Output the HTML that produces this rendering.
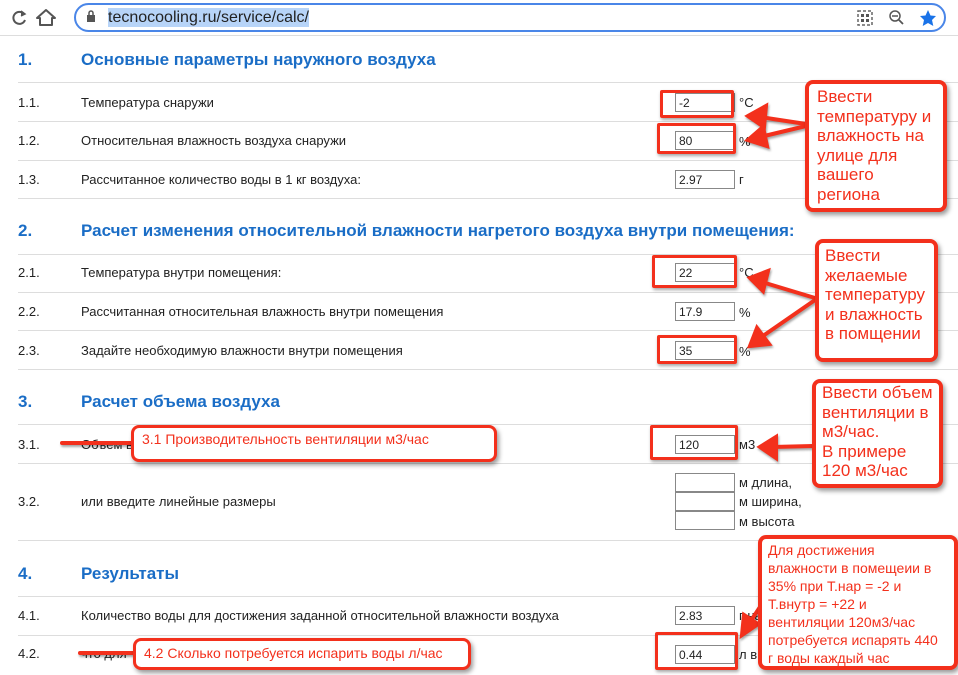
<!DOCTYPE html>
<html><head><meta charset="utf-8"><style>
*{margin:0;padding:0;box-sizing:border-box}
body{width:958px;height:675px;overflow:hidden;background:#fff;font-family:"Liberation Sans","DejaVu Sans",sans-serif;position:relative;color:#222}
.a{position:absolute;white-space:nowrap}
.hr{position:absolute;left:18px;right:0;height:1px;background:#ddd}
.n{position:absolute;left:18px;font-size:13px}
.l{position:absolute;left:81px;font-size:13px}
.h{position:absolute;font-size:17px;font-weight:bold;color:#1a6dc6}
.in{position:absolute;left:675px;width:60px;height:19px;border:1px solid #888;font-size:12px;padding:2px 3px;background:#fff}
.u{position:absolute;left:739px;font-size:13px}
.rb{position:absolute;border:3px solid #f3301c;border-radius:2px;box-shadow:1px 2px 3px rgba(0,0,0,.35)}
.cb{position:absolute;border:4px solid #f3301c;border-radius:8px;background:#fff;color:#f3301c;box-shadow:2px 3px 5px rgba(0,0,0,.4);line-height:19.5px;font-size:17px;padding:3px 6px;white-space:nowrap}
</style></head><body>
<div class="a" style="left:0;top:0;width:958px;height:36px;background:#fff;border-bottom:1px solid #ddd"></div>
<svg class="a" style="left:10px;top:8px" width="48" height="20" viewBox="0 0 48 20">
<path d="M14 6 A6 6 0 1 0 15 12" fill="none" stroke="#555" stroke-width="2"/><path d="M11 3 L15 6 L11 8" fill="#555" stroke="#555" stroke-width="1.5"/>
<path d="M36 2 L45 10 H42 V17 H30 V10 H27 Z" fill="none" stroke="#555" stroke-width="2" stroke-linejoin="round"/>
</svg>
<div class="a" style="left:74px;top:3px;width:872px;height:29px;border:2px solid #4a86e8;border-radius:15px"></div>
<svg class="a" style="left:86px;top:10px" width="10" height="13"><rect x="1" y="5" width="8" height="7" fill="#555"/><path d="M3 5V3a2 2 0 0 1 4 0v2" fill="none" stroke="#555" stroke-width="1.5"/></svg>
<div class="a" style="left:108px;top:8px;font-size:16px;color:#222;background:#b7d4f8;line-height:19px">tecnocooling.ru/service/calc/</div>
<svg class="a" style="left:856px;top:9px" width="90" height="18">
<rect x="2" y="2" width="14" height="14" fill="none" stroke="#666" stroke-width="1.5" stroke-dasharray="3 2"/><rect x="5" y="5" width="3" height="3" fill="#555"/><rect x="10" y="5" width="3" height="3" fill="#555"/><rect x="5" y="10" width="3" height="3" fill="#555"/><rect x="10" y="10" width="3" height="3" fill="#555"/>
<circle cx="39" cy="7" r="5" fill="none" stroke="#555" stroke-width="1.5"/><line x1="36" y1="7" x2="42" y2="7" stroke="#555" stroke-width="1.5"/><line x1="43" y1="11" x2="47" y2="15" stroke="#555" stroke-width="1.8"/>
<path d="M72 1 L74.5 6.5 L80 7 L76 11 L77.3 17 L72 14 L66.7 17 L68 11 L64 7 L69.5 6.5Z" fill="#1a73e8"/>
</svg>

<div class="h" style="left:18px;top:50px">1.</div><div class="h" style="left:81px;top:50px">Основные параметры наружного воздуха</div>
<div class="hr" style="top:82px"></div>
<div class="n" style="top:95px">1.1.</div><div class="l" style="top:95px">Температура снаружи</div>
<div class="in" style="top:93px">-2</div><div class="u" style="top:95px">°C</div>
<div class="hr" style="top:121px"></div>
<div class="n" style="top:133px">1.2.</div><div class="l" style="top:133px">Относительная влажность воздуха снаружи</div>
<div class="in" style="top:131px">80</div><div class="u" style="top:134px">%</div>
<div class="hr" style="top:160px"></div>
<div class="n" style="top:172px">1.3.</div><div class="l" style="top:172px">Рассчитанное количество воды в 1 кг воздуха:</div>
<div class="in" style="top:170px">2.97</div><div class="u" style="top:172px">г</div>
<div class="hr" style="top:198px"></div>

<div class="h" style="left:18px;top:221px">2.</div><div class="h" style="left:81px;top:221px">Расчет изменения относительной влажности нагретого воздуха внутри помещения:</div>
<div class="hr" style="top:254px"></div>
<div class="n" style="top:265px">2.1.</div><div class="l" style="top:265px">Температура внутри помещения:</div>
<div class="in" style="top:263px">22</div><div class="u" style="top:265px">°C</div>
<div class="hr" style="top:292px"></div>
<div class="n" style="top:304px">2.2.</div><div class="l" style="top:304px">Рассчитанная относительная влажность внутри помещения</div>
<div class="in" style="top:302px">17.9</div><div class="u" style="top:305px">%</div>
<div class="hr" style="top:330px"></div>
<div class="n" style="top:343px">2.3.</div><div class="l" style="top:343px">Задайте необходимую влажности внутри помещения</div>
<div class="in" style="top:341px">35</div><div class="u" style="top:344px">%</div>
<div class="hr" style="top:369px"></div>

<div class="h" style="left:18px;top:392px">3.</div><div class="h" style="left:81px;top:392px">Расчет объема воздуха</div>
<div class="hr" style="top:424px"></div>
<div class="n" style="top:437px">3.1.</div><div class="l" style="top:437px">Объем воздуха</div>
<div class="in" style="top:435px">120</div><div class="u" style="top:437px">м3</div>
<div class="hr" style="top:463px"></div>
<div class="n" style="top:494px">3.2.</div><div class="l" style="top:494px">или введите линейные размеры</div>
<div class="in" style="top:473px"></div><div class="u" style="top:475px">м длина,</div>
<div class="in" style="top:492px"></div><div class="u" style="top:494px">м ширина,</div>
<div class="in" style="top:511px"></div><div class="u" style="top:514px">м высота</div>
<div class="hr" style="top:540px"></div>

<div class="h" style="left:18px;top:564px">4.</div><div class="h" style="left:81px;top:564px">Результаты</div>
<div class="hr" style="top:596px"></div>
<div class="n" style="top:608px">4.1.</div><div class="l" style="top:608px">Количество воды для достижения заданной относительной влажности воздуха</div>
<div class="in" style="top:606px">2.83</div><div class="u" style="top:608px">г на</div>
<div class="hr" style="top:635px"></div>
<div class="n" style="top:646px">4.2.</div><div class="l" style="top:646px">что для</div>
<div class="in" style="top:645px">0.44</div><div class="u" style="top:647px">л в</div>

<div class="rb" style="left:660px;top:90px;width:74px;height:28px"></div>
<div class="rb" style="left:657px;top:123px;width:79px;height:31px"></div>
<div class="rb" style="left:652px;top:255px;width:85px;height:33px"></div>
<div class="rb" style="left:657px;top:335px;width:80px;height:29px"></div>
<div class="rb" style="left:650px;top:425px;width:88px;height:35px"></div>
<div class="rb" style="left:655px;top:632px;width:83px;height:38px"></div>

<svg class="a" style="left:0;top:0" width="958" height="675">
<g fill="#f3301c" stroke="#f3301c" stroke-width="4" stroke-linecap="round" style="filter:drop-shadow(1px 2px 1px rgba(0,0,0,.35))">
<line x1="806" y1="124" x2="760" y2="117"/><path d="M748 116 L766 106 L764 127Z"/>
<line x1="806" y1="126" x2="760" y2="137"/><path d="M748 140 L763 127 L767 146Z"/>
<line x1="815" y1="298" x2="762" y2="282"/><path d="M750 278 L768 271 L763 291Z"/>
<line x1="815" y1="300" x2="760" y2="338"/><path d="M750 346 L757 328 L769 344Z"/>
<line x1="813" y1="446" x2="772" y2="447"/><path d="M760 447 L776 437 L776 458Z"/>
<line x1="760" y1="607" x2="748" y2="625"/><path d="M742 635 L744 615 L758 624Z"/>
<line x1="62" y1="443" x2="131" y2="443"/>
<line x1="80" y1="653" x2="133" y2="653"/>
</g></svg>

<div class="cb" style="left:131px;top:425px;width:366px;height:37px;font-size:14px;line-height:18px;padding:2px 8px;border-width:3px">3.1 Производительность вентиляции м3/час</div>
<div class="cb" style="left:133px;top:638px;width:338px;height:32px;font-size:14px;line-height:18px;padding:3px 8px;border-width:3px">4.2 Сколько потребуется испарить воды л/час</div>

<div class="cb" style="left:805px;top:80px;width:142px;height:132px;padding:3px 8px">Ввести<br>температуру и<br>влажность на<br>улице для<br>вашего<br>региона</div>
<div class="cb" style="left:815px;top:239px;width:123px;height:123px;padding:3px 6px">Ввести<br>желаемые<br>температуру<br>и влажность<br>в помщении</div>
<div class="cb" style="left:812px;top:379px;width:131px;height:109px;padding:0 6px">Ввести объем<br>вентиляции в<br>м3/час.<br>В примере<br>120 м3/час</div>
<div class="cb" style="left:758px;top:535px;width:200px;height:135px;font-size:14px;line-height:18px;padding:2px 6px">Для достижения<br>влажности в помещеии в<br>35% при Т.нар = -2 и<br>Т.внутр = +22 и<br>вентиляции 120м3/час<br>потребуется испарять 440<br>г воды каждый час</div>
</body></html>
